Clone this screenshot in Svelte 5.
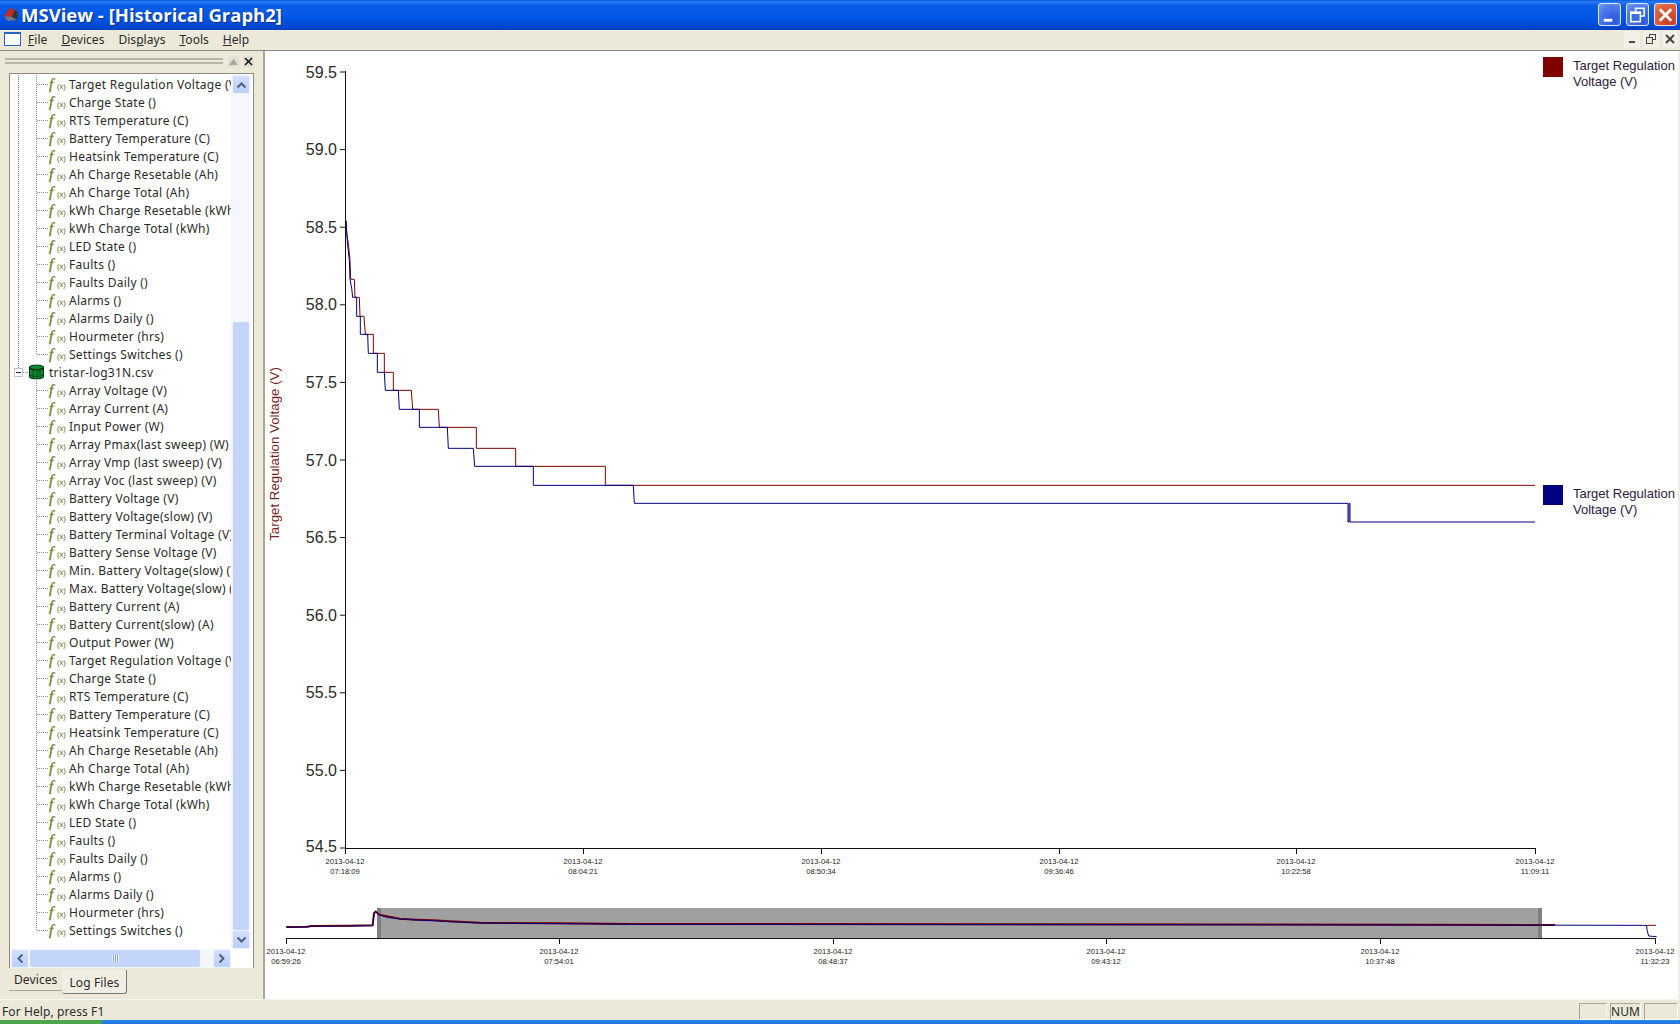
<script>
  const tail = ['Target Regulation Voltage (V)','Charge State ()','RTS Temperature (C)','Battery Temperature (C)','Heatsink Temperature (C)','Ah Charge Resetable (Ah)','Ah Charge Total (Ah)','kWh Charge Resetable (kWh)','kWh Charge Total (kWh)','LED State ()','Faults ()','Faults Daily ()','Alarms ()','Alarms Daily ()','Hourmeter (hrs)','Settings Switches ()'];
  const head = ['Array Voltage (V)','Array Current (A)','Input Power (W)','Array Pmax(last sweep) (W)','Array Vmp (last sweep) (V)','Array Voc (last sweep) (V)','Battery Voltage (V)','Battery Voltage(slow) (V)','Battery Terminal Voltage (V)','Battery Sense Voltage (V)','Min. Battery Voltage(slow) (V)','Max. Battery Voltage(slow) (V)','Battery Current (A)','Battery Current(slow) (A)','Output Power (W)'];
  const group2 = [...head, ...tail];
  const menus = [['F','ile'],['D','evices'],['Dis','p','lays'],['T','ools'],['H','elp']];

  const yLabels = ['59.5','59.0','58.5','58.0','57.5','57.0','56.5','56.0','55.5','55.0','54.5'];
  const mainTicks = [[345,'07:18:09'],[583,'08:04:21'],[821,'08:50:34'],[1059,'09:36:46'],[1296,'10:22:58'],[1535,'11:09:11']];
  const miniTicks = [[286,'06:59:26'],[559,'07:54:01'],[833,'08:48:37'],[1106,'09:43:12'],[1380,'10:37:48'],[1655,'11:32:23']];

  const z = (pts) => pts.map(([x, y]) => `${300 + x / 3},${200 + y / 3}`).join(' ');
  const m = (pts) => pts.map(([x, y]) => `${260 + x / 3},${830 + y / 3}`).join(' ');

  const red = z([[138,62],[140,100],[145,130],[150,180],[152,238],[163,238],[165,292],[178,292],[180,349],[192,349],[196,403],[220,403],[220,460],[253,460],[253,517],[280,517],[280,571],[334,571],[338,628],[415,628],[418,682],[529,682],[529,745],[647,745],[647,799],[916,799],[916,856],[3705,856]]);
  const blue = z([[138,62],[142,125],[148,182],[150,238],[155,265],[158,292],[170,292],[170,349],[181,349],[181,403],[203,403],[205,460],[232,460],[232,517],[253,517],[256,571],[295,571],[298,628],[358,628],[358,682],[442,682],[445,745],[520,745],[524,799],[700,799],[700,856],[1000,856],[1003,910],[3144,910],[3144,966],[3147,966],[3147,910],[3150,910],[3150,966],[3705,966]]);
  const miniBlue = m([[79,292],[140,291],[155,289],[265,288],[338,287],[342,250],[347,245],[358,255],[380,262],[420,267],[470,270],[520,272],[570,275],[660,279],[740,280],[900,281],[1120,283],[3600,285],[4150,286],[4160,287],[4161,300],[4166,318],[4190,320]]);
  const miniRed = m([[79,291],[140,290],[155,288],[265,287],[338,286],[342,250],[347,245],[358,254],[420,266],[470,269],[520,271],[570,274],[660,278],[740,279],[900,280],[1120,282],[3480,284],[3885,285]]);
  const miniRedEnd = m([[4160,286],[4188,286]]);
</script>

{#snippet group(items, g)}
  {#each items as label, i}
    <div class="row">
      <svg class="gutter" width="38" height="18" aria-hidden="true">
        {#if g}<line x1="8.5" y1="0" x2="8.5" y2="18" />{/if}
        <line x1="26.5" y1="0" x2="26.5" y2={i === items.length - 1 ? 9 : 18} />
        <line x1="27" y1="9.5" x2="38" y2="9.5" />
      </svg>
      <span class="fx"><i>f</i><small>(x)</small></span>
      <span class="label">{label}</span>
    </div>
  {/each}
{/snippet}

<div class="win">
  <header class="title">
    <svg class="appicon" width="16" height="16" viewBox="0 0 16 16" aria-hidden="true">
      <path d="M1 9 L7 1 L12 3 L9 10 Z" fill="#c8281e"/>
      <path d="M7 1 L15 5 L14 13 L9 10 L12 3 Z" fill="#333"/>
      <path d="M1 9 L9 10 L14 13 L5 14 Z" fill="#777"/>
    </svg>
    <span class="titletext">MSView - [Historical Graph2]</span>
    <div class="capbtns">
      <button class="cap"><svg width="22" height="22" viewBox="0 0 22 22"><rect x="5" y="15" width="9" height="3" fill="#fff"/></svg></button>
      <button class="cap"><svg width="22" height="22" viewBox="0 0 22 22" fill="none" stroke="#fff" stroke-width="1.6"><rect x="9" y="4" width="9" height="8"/><rect x="4" y="8" width="10" height="10" fill="#3a6de0"/><line x1="4" y1="9" x2="14" y2="9" stroke-width="2"/></svg></button>
      <button class="cap close"><svg width="22" height="22" viewBox="0 0 22 22" stroke="#fff" stroke-width="3"><line x1="5" y1="5" x2="17" y2="17"/><line x1="17" y1="5" x2="5" y2="17"/></svg></button>
    </div>
  </header>

  <nav class="menu">
    <svg class="docicon" width="18" height="15" viewBox="0 0 18 15" aria-hidden="true">
      <rect x="0.5" y="0.5" width="16" height="13" fill="#fff" stroke="#2a62c8"/>
      <rect x="0" y="0" width="17" height="2" fill="#2a62c8"/>
    </svg>
    {#each menus as parts}
      <span class="mi">
        {#if parts.length === 3}{parts[0]}<u>{parts[1]}</u>{parts[2]}{:else}<u>{parts[0]}</u>{parts[1]}{/if}
      </span>
    {/each}
    <div class="mdi">
      <span class="mb"><svg width="12" height="12" viewBox="0 0 12 12"><rect x="3" y="8" width="6" height="2" fill="#444"/></svg></span>
      <span class="mb"><svg width="12" height="12" viewBox="0 0 12 12" fill="none" stroke="#444"><rect x="4.5" y="1.5" width="6" height="5"/><rect x="1.5" y="4.5" width="6" height="6" fill="#ece9d8"/></svg></span>
      <span class="mb"><svg width="12" height="12" viewBox="0 0 12 12" stroke="#444" stroke-width="2"><line x1="2" y1="2" x2="10" y2="10"/><line x1="10" y1="2" x2="2" y2="10"/></svg></span>
    </div>
  </nav>

  <main class="body">
    <aside class="side">
      <div class="dockhead">
        <div class="grip"></div>
        <span class="dockbtn"><svg width="11" height="11" viewBox="0 0 11 11"><path d="M5.5 3 L10 9 H1 Z" fill="#a8a8a0"/></svg></span>
        <span class="dockbtn"><svg width="11" height="11" viewBox="0 0 11 11" stroke="#222" stroke-width="1.7"><line x1="2" y1="2" x2="9" y2="9"/><line x1="9" y1="2" x2="2" y2="9"/></svg></span>
      </div>
      <div class="treebox">
        <div class="treetop">
          <div class="tree">
            {@render group(tail, true)}
            <div class="row">
              <svg class="gutter csvg" width="20" height="18" aria-hidden="true">
                <line x1="8.5" y1="0" x2="8.5" y2="5" />
                <rect x="4.5" y="5.5" width="8" height="8" fill="#fff" stroke="#848484" />
                <line class="solid" x1="6" y1="9.5" x2="11" y2="9.5" />
                <line x1="13" y1="9.5" x2="20" y2="9.5" />
              </svg>
              <svg class="cyl" width="15" height="16" viewBox="0 0 15 16" aria-hidden="true">
                <path d="M0.5 3 C0.5 0.5 14.5 0.5 14.5 3 V13 C14.5 15.5 0.5 15.5 0.5 13 Z" fill="#0a8a2c" stroke="#0a2a12"/>
                <path d="M1 4 C3 6.5 12 6.5 14 4" fill="none" stroke="#0a2a12" stroke-width="1.4"/>
                <path d="M4 6 V14 M8 6.5 V14.5 M11 6 V14" stroke="#05501a"/>
                <path d="M1 11 C3 13 12 13 14 11" fill="none" stroke="#05501a"/>
              </svg>
              <span class="csv">tristar-log31N.csv</span>
            </div>
            {@render group(group2, false)}
          </div>
          <div class="vbar">
            <span class="sbtn"><svg width="11" height="8" viewBox="0 0 11 8" fill="none" stroke="#4d6185" stroke-width="2"><path d="M1.5 6.5 L5.5 2.5 L9.5 6.5"/></svg></span>
            <div class="vtrack"></div>
            <div class="vthumb"></div>
            <span class="sbtn"><svg width="11" height="8" viewBox="0 0 11 8" fill="none" stroke="#4d6185" stroke-width="2"><path d="M1.5 1.5 L5.5 5.5 L9.5 1.5"/></svg></span>
          </div>
        </div>
        <div class="hbar">
          <span class="sbtn h"><svg width="8" height="11" viewBox="0 0 8 11" fill="none" stroke="#4d6185" stroke-width="2"><path d="M6.5 1.5 L2.5 5.5 L6.5 9.5"/></svg></span>
          <div class="hthumb"><span class="ticks"></span></div>
          <div class="htrack"></div>
          <span class="sbtn h"><svg width="8" height="11" viewBox="0 0 8 11" fill="none" stroke="#4d6185" stroke-width="2"><path d="M1.5 1.5 L5.5 5.5 L1.5 9.5"/></svg></span>
          <div class="corner"></div>
        </div>
      </div>
      <div class="tabs">
        <span class="tab">Devices</span>
        <span class="tab active">Log Files</span>
      </div>
    </aside>

    <section class="view">
      <svg class="chart" width="1412" height="948" viewBox="265 51 1412 948" role="img" aria-label="Historical graph">
        <text class="ytitle" transform="translate(279 454) rotate(-90)" text-anchor="middle">Target Regulation Voltage (V)</text>

        <line class="axis" x1="345.5" y1="71" x2="345.5" y2="849" />
        <line class="axis" x1="345" y1="848.5" x2="1535" y2="848.5" />
        {#each yLabels as l, i}
          <line class="axis" x1="340" y1={72 + i * 77.6} x2="345" y2={72 + i * 77.6} />
          <text class="ylab" x="337" y={77.5 + i * 77.6 - (i === 10 ? 1.5 : 0)} text-anchor="end">{l}</text>
        {/each}
        {#each mainTicks as [x, t]}
          <line class="axis" x1={x + 0.5} y1="848" x2={x + 0.5} y2="854" />
          <text class="xlab" x={x} y="864" text-anchor="middle">2013-04-12</text>
          <text class="xlab" x={x} y="874" text-anchor="middle">{t}</text>
        {/each}

        <polyline class="red" points={red} />
        <polyline class="blue" points={blue} />

        <rect x="1543" y="57" width="20" height="20" fill="#800000" />
        <text class="leg" x="1573" y="70">Target Regulation</text>
        <text class="leg" x="1573" y="86">Voltage (V)</text>
        <rect x="1543" y="485" width="20" height="20" fill="#000080" />
        <text class="leg" x="1573" y="498">Target Regulation</text>
        <text class="leg" x="1573" y="514">Voltage (V)</text>

        <rect x="377" y="908" width="1165" height="30" fill="#a0a0a0" />
        <rect x="377" y="908" width="4" height="30" fill="#808080" />
        <rect x="1538" y="908" width="4" height="30" fill="#808080" />
        <polyline class="red thick" points={miniRed} />
        <polyline class="red" points={miniRedEnd} />
        <polyline class="blue" points={miniBlue} />
        <line class="axis" x1="286" y1="938.5" x2="1655" y2="938.5" />
        {#each miniTicks as [x, t]}
          <line class="axis" x1={x + 0.5} y1="938" x2={x + 0.5} y2="944" />
          <text class="xlab" x={x} y="954" text-anchor="middle">2013-04-12</text>
          <text class="xlab" x={x} y="964" text-anchor="middle">{t}</text>
        {/each}
      </svg>
    </section>
  </main>

  <footer class="status">
    <span class="help">For Help, press F1</span>
    <span class="pane p1"></span>
    <span class="pane p2">NUM</span>
    <span class="pane p3"></span>
  </footer>
  <div class="taskbar"><div class="start"></div></div>
</div>

<style>
  :global(body) { margin: 0; background: #ece9d8; overflow: hidden; }
  .win {
    width: 1680px; height: 1024px; display: flex; flex-direction: column;
    font-family: "Noto Sans", "Liberation Sans", sans-serif; font-size: 12px; color: #2a2a2a;
    background: #ece9d8; overflow: hidden;
  }
  .title {
    height: 30px; flex: none; display: flex; align-items: center; padding: 0 0 1px 3px; box-sizing: border-box;
    background: linear-gradient(#0a5be0 0, #2a7cf0 2px, #0a5fe8 5px, #0055e5 60%, #0048d0 90%, #0040c0 100%);
  }
  .appicon { flex: none; }
  .titletext {
    margin-left: 2px; font-family: "Open Sans", sans-serif; font-weight: 700; font-size: 18.5px; color: #fff;
    text-shadow: 1px 1px 1px #0a2f90; white-space: nowrap;
  }
  .capbtns { margin-left: auto; display: flex; gap: 5px; padding-right: 3px; }
  .cap {
    width: 23px; height: 23px; padding: 0; border: 1px solid #dfe8fb; border-radius: 3px; display: flex; align-items: center; justify-content: center;
    background: radial-gradient(circle at 70% 80%, #2a55d8, #4a78e8 60%, #7a9cf0);
  }
  .cap.close { background: radial-gradient(circle at 70% 80%, #c83a20, #e0603c 70%, #ec8a70); }

  .menu {
    flex: none; display: flex; align-items: center; padding: 0 0 2px 4px; box-sizing: border-box; height: 21px;
    border-bottom: 1px solid #8a8880; background: #ece9d8;
  }
  .docicon { flex: none; margin-right: 6px; }
  .mi { margin-right: 14px; white-space: nowrap; font-size: 12px; letter-spacing: 0.04px; }
  .mdi { margin-left: auto; display: flex; gap: 3px; padding-right: 2px; }
  .mb { width: 16px; height: 17px; display: flex; align-items: center; justify-content: center; background: #f2f0e6; }

  .body { flex: 1; min-height: 0; display: flex; }
  .side { width: 265px; flex: none; display: flex; flex-direction: column; box-sizing: border-box; border-right: 2px solid #a8a69a; }
  .dockhead { height: 22px; flex: none; display: flex; align-items: center; padding: 0 9px 2px 5px; gap: 4px; box-sizing: border-box; }
  .grip { flex: 1; height: 2px; border-top: 2px solid #b8b6aa; border-bottom: 2px solid #b8b6aa; margin-right: 1px; }
  .dockbtn { width: 11px; height: 11px; display: flex; background: #e2e0d4; }
  .treebox {
    margin: 0 9px 0 9px; flex: 1; min-height: 0; display: flex; flex-direction: column; background: #fff;
    border: 1px solid #8e8c80; border-bottom: none; box-sizing: border-box;
  }
  .treetop { flex: 1; min-height: 0; display: flex; }
  .tree { width: 221px; flex: none; overflow: hidden; padding-top: 1px; }
  .row { height: 18px; display: flex; align-items: center; white-space: nowrap; }
  .gutter { flex: none; stroke: #8a8a8a; stroke-dasharray: 1 1; }
  .gutter .solid { stroke: #222; stroke-dasharray: none; }
  .csvg { width: 20px; }
  .cyl { flex: none; margin-left: -1px; margin-right: 5px; margin-top: -1px; }
  .fx { width: 21px; flex: none; display: flex; align-items: baseline; color: #76761a; }
  .fx i { font-family: "Liberation Serif", serif; font-size: 15px; width: 8px; margin-left: 1px; line-height: 14px; -webkit-text-stroke: 0.3px #76761a; }
  .fx small { font-family: "Liberation Sans", sans-serif; font-size: 7.5px; line-height: 8px; color: #5a5a10; }
  .label, .csv { font-size: 12px; letter-spacing: 0.28px; }
  .vbar { width: 20px; flex: none; display: flex; flex-direction: column; background: #f4f7fd; padding: 1px 1px 0; box-sizing: border-box; }
  .vtrack { height: 228px; flex: none; }
  .vthumb { flex: 1; background: #c3d5fb; border-radius: 2px; margin: 0 1px; }
  .sbtn {
    width: 18px; height: 19px; flex: none; display: flex; align-items: center; justify-content: center; box-sizing: border-box;
    background: linear-gradient(#d4e0fc, #bccffa); border: 1px solid #eef3fe; border-radius: 2px;
  }
  .hbar { height: 19px; flex: none; display: flex; align-items: center; padding-left: 1px; background: #f4f7fd; }
  .hthumb { width: 170px; height: 17px; margin-left: 1px; background: #c3d5fb; border-radius: 2px; display: flex; align-items: center; justify-content: center; }
  .ticks { width: 7px; height: 7px; background: repeating-linear-gradient(to right, #eef3fe 0 1px, #8ca4d4 1px 2px); }
  .htrack { width: 13px; }
  .corner { flex: 1; background: #fff; align-self: stretch; }
  .tabs { height: 31px; flex: none; display: flex; align-items: flex-start; padding: 2px 0 0 9px; box-sizing: border-box; }
  .tab { height: 20px; line-height: 20px; padding: 0 5px; border-bottom: 1px solid #a8a69a; font-size: 12px; white-space: nowrap; letter-spacing: 0.1px; }
  .tab.active { height: 23px; line-height: 25px; padding: 0 7px; background: #f0eee2; border-right: 1px solid #777; border-bottom: 1px solid #777; border-radius: 0 0 3px 3px; }

  .view { flex: 1; min-width: 0; background: #fff; border-right: 2px solid #f0eee4; border-top: 1px solid #fff; overflow: hidden; }
  .chart { display: block; margin-top: -1px; font-family: "Liberation Sans", sans-serif; }
  .axis { stroke: #111; stroke-width: 1; fill: none; }
  .ylab { font-size: 16px; fill: #2a2a2a; }
  .xlab { font-size: 7.6px; fill: #222; }
  .ytitle { font-size: 13.3px; fill: #7a1c1c; }
  .leg { font-size: 13px; fill: #2c2040; }
  .red { fill: none; stroke: #800000; stroke-width: 1; }
  .blue { fill: none; stroke: #000080; stroke-width: 1; }
  .thick { stroke-width: 2; }

  .status { height: 21px; flex: none; display: flex; align-items: center; padding: 2px 0 0 2px; background: #ece9d8; border-top: 1px solid #f6f5ee; box-sizing: border-box; }
  .help { margin-right: auto; font-size: 12px; letter-spacing: 0.1px; }
  .pane { height: 17px; box-sizing: border-box; border: 1px solid; border-color: #aca899 #fff #fff #aca899; margin-left: 3px; text-align: center; line-height: 16px; font-size: 12px; }
  .p1 { width: 28px; } .p2 { width: 31px; } .p3 { width: 34px; margin-right: 2px; }
  .taskbar { height: 4px; flex: none; background: linear-gradient(#1a8ce8, #2a70e0); }
  .start { width: 102px; height: 4px; background: #4ca64c; }
</style>
